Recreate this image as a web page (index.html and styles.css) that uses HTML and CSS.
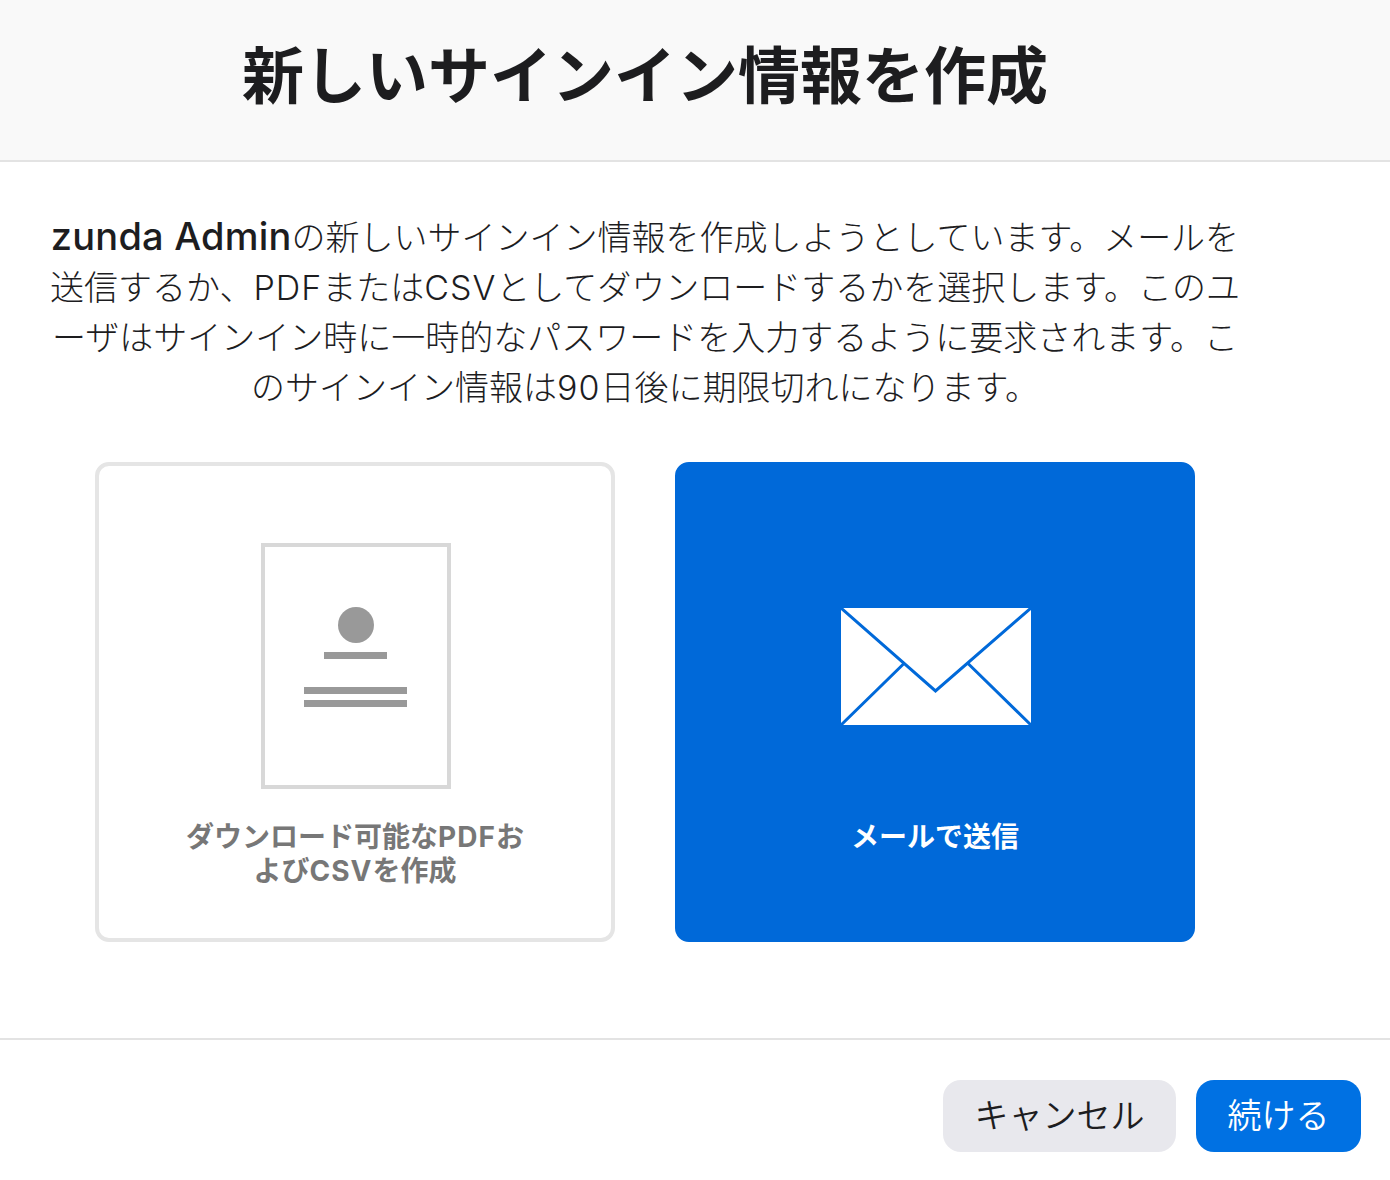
FILE: index.html
```html
<!DOCTYPE html>
<html lang="ja">
<head>
<meta charset="utf-8">
<title>新しいサインイン情報を作成</title>
<link rel="stylesheet" href="styles.css">
</head>
<body>
<header class="head"><h1 class="title">新しいサインイン情報を作成</h1></header>
<main class="content">
  <p class="desc"><span class="app">zunda Admin</span>の新しいサインイン情報を作成しようとしています。メールを<br>送信するか、<span class="lat">PDF</span>または<span class="lat">CSV</span>としてダウンロードするかを選択します。このユ<br>ーザはサインイン時に一時的なパスワードを入力するように要求されます。こ<br>のサインイン情報は<span class="lat">90</span>日後に期限切れになります。</p>
  <div class="cards">
    <div class="card">
      <div class="doc">
        <span class="avatar"></span>
        <span class="bar"></span>
        <span class="line first"></span>
        <span class="line"></span>
      </div>
      <div class="label">ダウンロード可能な<span class="lat">PDF</span>お<br>よび<span class="lat">CSV</span>を作成</div>
    </div>
    <div class="card active">
      <div class="envelope">
        <svg width="190" height="117" viewBox="0 0 190 117">
          <rect width="190" height="117" fill="#fff"/>
          <path d="M0 0L94.500 83L190 0M0 117L64 54.500M190 117L126 54.500" fill="none" stroke="#0069d9" stroke-width="3"/>
        </svg>
      </div>
      <div class="label">メールで送信</div>
    </div>
  </div>
</main>
<footer class="foot">
  <button class="btn cancel">キャンセル</button>
  <button class="btn go">続ける</button>
</footer>
</body>
</html>
```
FILE: styles.css
```css
* { box-sizing: border-box; }
html, body { margin: 0; padding: 0; }
body {
  width: 1390px;
  height: 1180px;
  background: #fff;
  color: #1d1d1f;
  font-family: "Inter", "Noto Sans CJK JP", sans-serif;
  overflow: hidden;
}
.head {
  height: 162px;
  background: #f9f9f9;
  border-bottom: 2px solid #e3e3e3;
  padding: 0 100px 6px 0;
  display: flex;
  align-items: center;
  justify-content: center;
}
.title {
  margin: 0;
  font-size: 62px;
  font-weight: 700;
  line-height: 1;
  white-space: nowrap;
}
.content {
  height: 878px;
  padding-top: 51px;
  border-bottom: 2px solid #e3e3e3;
}
.desc {
  width: 1290px;
  margin: 0 0 49px;
  text-align: center;
  font-size: 34px;
  line-height: 50px;
  font-weight: 300;
  white-space: nowrap;
}
.app { font-size: 38px; font-weight: 500; line-height: 1; letter-spacing: 0.2px; }
.lat { letter-spacing: 1px; }
.cards {
  width: 1290px;
  display: flex;
  justify-content: center;
  gap: 60px;
}
.card {
  width: 520px;
  height: 480px;
  border: 4px solid #e5e5e5;
  border-radius: 14px;
  padding-top: 77px;
  display: flex;
  flex-direction: column;
  align-items: center;
  background: #fff;
}
.card.active { background: #0069d9; border-color: #0069d9; }
.doc {
  width: 190px;
  height: 246px;
  margin-left: 2px;
  border: 4px solid #d8d8d8;
  display: flex;
  flex-direction: column;
  align-items: center;
  padding-top: 60px;
}
.avatar { width: 36px; height: 36px; border-radius: 50%; background: #999; }
.bar { width: 63px; height: 7px; background: #999; margin: 9px 1px 0 0; }
.line { width: 103px; height: 7px; background: #999; margin: 6px 1px 0 0; }
.line.first { margin-top: 28px; }
.envelope { height: 246px; padding-top: 65px; margin-left: 2px; }
.envelope svg { display: block; }
.label {
  margin-top: 31px;
  font-size: 28px;
  line-height: 34px;
  font-weight: 700;
  text-align: center;
  color: #777;
  white-space: nowrap;
}
.active .label { color: #fff; }
.foot {
  display: flex;
  justify-content: flex-end;
  gap: 20px;
  padding: 40px 29px 0 0;
}
.btn {
  height: 72px;
  border: 0;
  border-radius: 18px;
  font-family: "Noto Sans CJK JP", sans-serif;
  font-size: 34px;
  font-weight: 350;
  padding: 0 0 5px;
}
.cancel { width: 233px; background: #e8e8ed; color: #1d1d1f; }
.go { width: 165px; background: #0071e3; color: #fff; }
```
